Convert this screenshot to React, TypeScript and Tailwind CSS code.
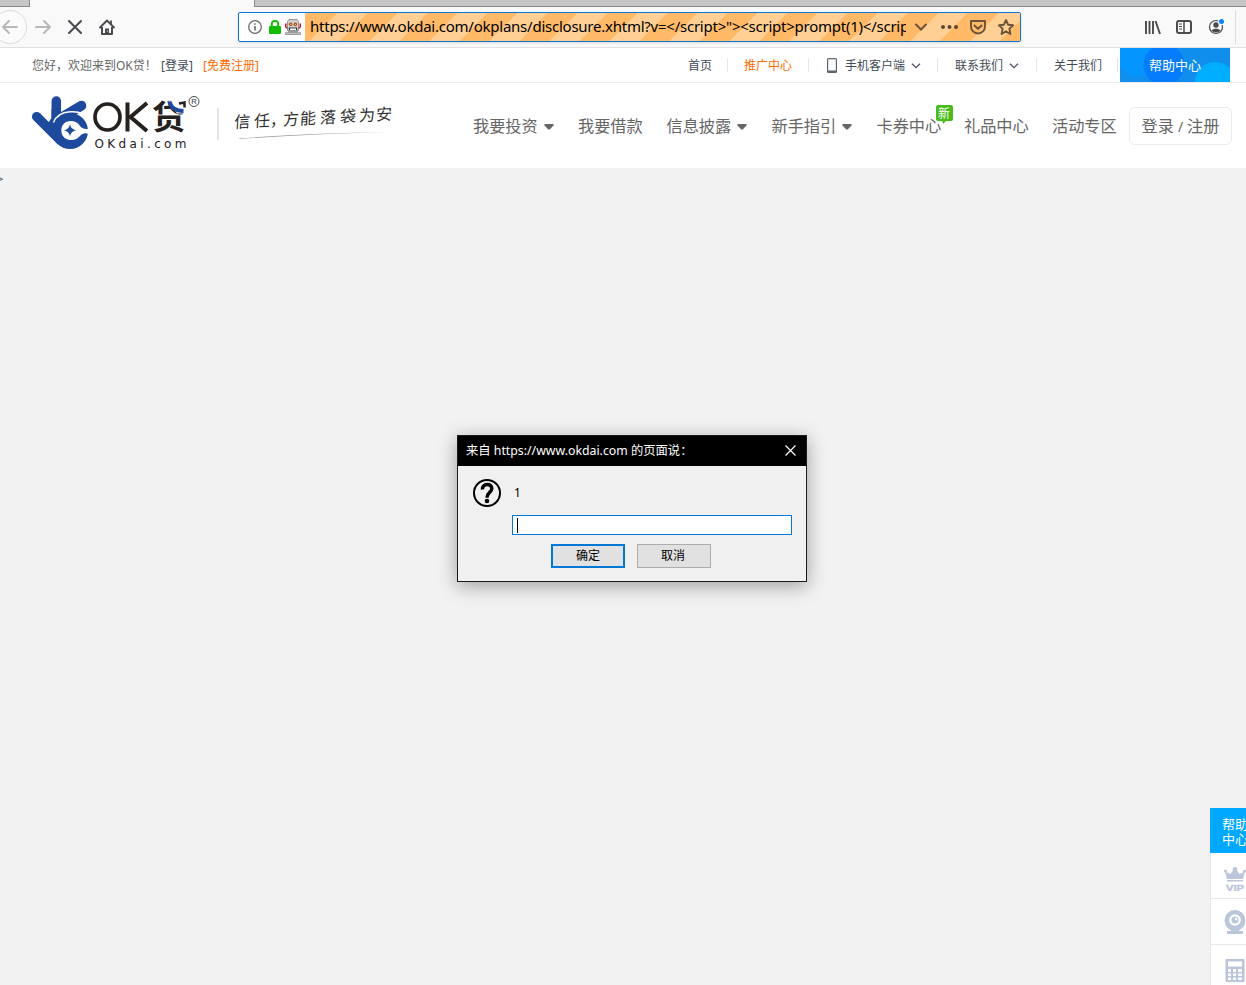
import React from "react";

const uiFont = "font-['Noto_Sans','Noto_Sans_CJK_SC',sans-serif]";

function Caret() {
  return (
    <svg width="10" height="6" viewBox="0 0 10 6" className="ml-[6px] mt-[2px] shrink-0">
      <path d="M1 0h8l1 1-4.3 4.600h-1.400L0 1z" fill="#666" />
    </svg>
  );
}

function Chevron() {
  return (
    <svg width="10" height="6" viewBox="0 0 10 6" className="ml-[6px] shrink-0">
      <path d="M1 .7l4 4 4-4" fill="none" stroke="#4b555f" strokeWidth="1.300" />
    </svg>
  );
}

function Divider() {
  return <span className="h-3.5 w-px shrink-0 bg-[#e6e6e6]" />;
}

function Robot() {
  return (
    <svg width="16" height="16" viewBox="0 0 16 16">
      <path d="M0 4.500h1.500V8H3v1.500H1L0 8zM16 4.500h-1.500V8H13v1.500h2L16 8z" fill="#c8102e" />
      <path d="M4 .5h8l1.500 2v9h-11v-9z" fill="#cfcfcf" stroke="#808080" strokeWidth=".8" />
      <circle cx="5.700" cy="5.200" r="1.700" fill="#a33c16" />
      <circle cx="10.300" cy="5.200" r="1.700" fill="#a33c16" />
      <circle cx="5.700" cy="5.200" r=".8" fill="#ffd54a" />
      <circle cx="10.300" cy="5.200" r=".8" fill="#ffd54a" />
      <path d="M4.500 11V9h7v2" fill="none" stroke="#333" strokeWidth="1.200" />
      <path d="M5.200 9.700h5.600v1.300H5.200z" fill="#fff" />
      <path d="M3 12h10v1.500H3z" fill="#9a9a9a" />
      <path d="M.5 13.700h15v1.900H.5z" fill="#cfcfcf" stroke="#777" strokeWidth=".7" />
    </svg>
  );
}

function Browser() {
  return (
    <div className="h-12 border-b border-[#e0e0e1] bg-[#f9f9fa]">
      <div className="flex h-[7px]">
        <div className="w-[30px] border-r border-b border-[#8a8a8a] bg-[#c6c6c6]" />
        <div className="w-[224px]" />
        <div className="flex-1 border-b border-l border-[#8a8a8a] bg-[#c6c6c6]" />
      </div>
      <div className="flex h-10 items-center">
        <svg width="130" height="40" viewBox="0 0 130 40" className="shrink-0">
          <circle cx="10" cy="20" r="16.500" fill="#fbfbfb" stroke="#dcdcdc" />
          <g fill="none" stroke="#b8b8b8" strokeWidth="2" strokeLinecap="round" strokeLinejoin="round">
            <path d="M17 20H3M9 14l-6 6 6 6" />
            <path d="M36 20h14M44 14l6 6-6 6" />
          </g>
          <path d="M69 14l12 12M81 14L69 26" stroke="#4a4a4f" strokeWidth="2" strokeLinecap="round" />
          <path d="M111 13.500v4" stroke="#4a4a4f" strokeWidth="1.800" />
          <path d="M100 20.500l7-7 7 7" fill="none" stroke="#4a4a4f" strokeWidth="1.900" strokeLinecap="round" strokeLinejoin="round" />
          <path d="M102 20v7h10v-7" fill="none" stroke="#4a4a4f" strokeWidth="2" strokeLinejoin="round" />
          <path d="M105 21.500h4V27h-4z" fill="#4a4a4f" />
          <path d="M107.500 23.500v1" stroke="#f9f9fa" />
        </svg>
        <div className="ml-[108px] flex h-[30px] w-[783px] shrink-0 items-center rounded-xs border border-[#0a78d7] bg-white shadow-sm">
          <div className="flex w-[66px] shrink-0 items-center pl-[9px]">
            <svg width="14" height="14" viewBox="0 0 14 14">
              <circle cx="7" cy="7" r="6.300" fill="none" stroke="#6b6b70" strokeWidth="1.300" />
              <path d="M7 6v4.500M7 3.300v1.500" stroke="#6b6b70" strokeWidth="1.600" />
            </svg>
            <svg width="12" height="14" viewBox="0 0 12 14" className="ml-[7px]">
              <path d="M2.800 7V4a3.200 3.200 0 016.400 0v3" fill="none" stroke="#12bc00" strokeWidth="2" />
              <rect y="6" width="12" height="8" rx="1" fill="#12bc00" />
            </svg>
            <span className="ml-[4px]"><Robot /></span>
          </div>
          <div className="flex h-full min-w-0 flex-1 items-center bg-[repeating-linear-gradient(135deg,#ffcf94_0px,#ffcf94_2px,#ffb967_2px,#ffb967_23.3px,#ffcf94_23.3px,#ffcf94_42.43px)] pl-[5px]">
            <div className={`mb-[2px] w-[596px] shrink-0 overflow-hidden text-[15px] leading-[26px] tracking-[-0.24px] whitespace-nowrap text-black ${uiFont}`}>
              {'https://www.okdai.com/okplans/disclosure.xhtml?v=</script>"><script>prompt(1)</script>'}
            </div>
            <svg width="110" height="28" viewBox="0 0 110 28" className="ml-px shrink-0">
              <path d="M9 11.500l5 5 5-5" fill="none" stroke="#6b5238" strokeWidth="2" strokeLinecap="round" />
              <g fill="#5d4630">
                <circle cx="36" cy="14" r="2" />
                <circle cx="42.500" cy="14" r="2" />
                <circle cx="49" cy="14" r="2" />
              </g>
              <g fill="none" stroke="#6b5238" strokeWidth="1.900" strokeLinecap="round" strokeLinejoin="round">
                <path d="M64 8h14v5.500a7 7 0 01-14 0zM67.500 12.500l3.500 3.300 3.500-3.300" />
                <path d="M99 7l2.100 4.700 5 .6-3.700 3.500 1 5.200-4.400-2.600-4.400 2.600 1-5.200-3.700-3.500 5-.6z" />
              </g>
            </svg>
          </div>
        </div>
        <svg width="110" height="40" viewBox="0 0 110 40" className="ml-[115px] shrink-0">
          <g stroke="#4a4a4f" strokeWidth="2" fill="none">
            <path d="M10 14v13M13.500 14v13M17 14v13M19.500 14l4.500 13" strokeWidth="1.900" />
            <rect x="41" y="14" width="14" height="12" rx="2" />
            <path d="M48 14v12" strokeWidth="1.500" />
            <path d="M43 17h3M43 19.500h3M43 22h3" strokeWidth="1" />
          </g>
          <circle cx="80" cy="20" r="6.500" fill="none" stroke="#4a4a4f" strokeWidth="1.200" />
          <circle cx="80" cy="18" r="2.700" fill="#4a4a4f" />
          <path d="M75.500 23.500c2-2.500 7-2.500 9 0-2 2.500-7 2.500-9 0z" fill="#4a4a4f" />
          <circle cx="85.500" cy="14.500" r="3.400" fill="#f9f9fa" />
          <circle cx="85.500" cy="14.500" r="2.500" fill="#0a84ff" />
          <path d="M99.500 3v34" stroke="#dcdcdc" />
        </svg>
      </div>
    </div>
  );
}

function TopBar() {
  return (
    <div className="flex h-[35px] items-center border-b border-[#ececec] bg-white text-xs whitespace-nowrap text-[#414b55]">
      <div className="flex w-[688px] shrink-0 pt-[2px] pl-8 text-[#666]">
        <span className="w-[129px]">您好，欢迎来到OK贷！</span>
        <span className="w-[42px] text-[#414b55]">[登录]</span>
        <span className="text-[#ff6b00]">[免费注册]</span>
      </div>
      <span className="w-[39px] shrink-0 pt-[2px]">首页</span>
      <Divider />
      <span className="w-[80px] shrink-0 pt-[2px] pl-4 text-[#ff6b00]">推广中心</span>
      <Divider />
      <span className="flex w-[128px] shrink-0 items-center pt-[2px] pl-[18px]">
        <svg width="11" height="16" viewBox="0 0 11 16" className="mr-[7px] shrink-0">
          <path fillRule="evenodd" d="M1.500 0h7A1.500 1.500 0 0110 1.500v12A1.500 1.500 0 018.500 15h-7A1.500 1.500 0 010 13.500v-12A1.500 1.500 0 011.500 0zM1.200 1.200v11.300h7.600V1.200z" fill="#5d666f" />
        </svg>
        手机客户端<Chevron />
      </span>
      <Divider />
      <span className="flex w-[98px] shrink-0 items-center pt-[2px] pl-[17px]">联系我们<Chevron /></span>
      <Divider />
      <span className="w-[80px] shrink-0 pt-[2px] pl-[17px]">关于我们</span>
      <Divider />
      <div className="relative ml-[2px] flex h-[34px] w-[110px] shrink-0 items-center overflow-hidden bg-[#108eee] pt-[2px] pl-[29px] text-[13px] text-white">
        <svg width="110" height="34" className="absolute inset-0">
          <circle cx="18" cy="8" r="21" fill="#0495ff" />
          <circle cx="44" cy="17" r="20.500" fill="#057cfb" />
          <circle cx="95" cy="34" r="20" fill="#00aeff" />
        </svg>
        <span className="relative">帮助中心</span>
      </div>
    </div>
  );
}

function Logo() {
  return (
    <svg width="420" height="85" viewBox="0 83 420 85" className="w-[420px] shrink-0">
      <g stroke="#1d4a9c" strokeLinecap="round" fill="none">
        <path d="M36.700 116.700L60 140" strokeWidth="9.500" />
        <path d="M56.300 101v21" strokeWidth="9.500" />
        <path d="M81.300 105.700L64 116" strokeWidth="10" />
      </g>
      <path d="M51.500 109v9l-4 6 12 19 12-12-8-18z" fill="#1d4a9c" />
      <circle cx="70" cy="131" r="18" fill="#1d4a9c" />
      <path d="M53.500 122.500C56 116 62 112.300 70 111.800c4-.3 9 0 13 2" fill="none" stroke="#fff" strokeWidth="1.400" />
      <path d="M61.300 130.500C61.300 119 76 118.500 80 126c2 2.800 5 3.300 9 2.700v5.300c-4-1.500-7-.8-9.500 2.500-5.500 6.500-18.200 4-18.200-6z" fill="#fff" />
      <path d="M80 127c3 3 5.500 2.500 8 2.500v3c-2.500-.3-5 .2-8 3z" fill="#fff" />
      <path d="M70 124.300q1 5 6 6-5 1-6 6-1-5-6-6 5-1 6-6z" fill="#1d4a9c" />
      <ellipse cx="107.500" cy="117" rx="12.500" ry="13" fill="none" stroke="#25211f" strokeWidth="3.700" />
      <path d="M127.500 102.500v29M147 103l-16.500 14 16.500 14" fill="none" stroke="#25211f" strokeWidth="4" />
      <text x="152" y="128.500" fontSize="33" fontWeight="700" textLength="34" lengthAdjust="spacingAndGlyphs" fill="#25211f" fontFamily="'Noto Sans CJK SC', sans-serif">贷</text>
      <path d="M168 100.500h18v13h-9z" fill="#fff" />
      <path d="M169.500 101.500c1.500 6 6 9.500 14 9.500" fill="none" stroke="#1d4a9c" strokeWidth="3.800" />
      <path d="M179 103.500l5.500-1v5" fill="none" stroke="#25211f" strokeWidth="2.500" />
      <circle cx="194" cy="101.500" r="5" fill="none" stroke="#333" strokeWidth=".9" />
      <text x="191.300" y="104.300" fontSize="7.500" fill="#333" fontFamily="'Liberation Sans', sans-serif">R</text>
      <text x="94.500" y="148" fontSize="12" textLength="92" fill="#25211f" fontFamily="'DejaVu Sans', sans-serif">OKdai.com</text>
      <path d="M218 108v32" stroke="#c8c8c8" />
      <g transform="rotate(-3 235 130)">
        <text transform="translate(234 128) skewX(-6)" fontFamily="'Noto Sans CJK SC', sans-serif" fontSize="16" fontWeight="400" fill="#303030" x="0 20 36 49 66 86 106 125 142">信任，方能落袋为安</text>
      </g>
      <path d="M238 138.500c50-4 100-5.500 152-6.500-50 1.500-100 3-149 7z" fill="#999" />
    </svg>
  );
}

function NavItem({ label, width, caret = false, isNew = false }: { label: string; width: string; caret?: boolean; isNew?: boolean }) {
  return (
    <span className={`relative flex shrink-0 items-center ${width}`}>
      {label}
      {caret && <Caret />}
      {isNew && (
        <span className="absolute top-[-9px] left-[59px] flex h-4 w-[17px] items-center justify-center rounded-xs bg-[#49bc1a] pt-px text-xs text-white">
          新
          <svg width="6" height="5" className="absolute top-[15px] left-[6px]"><path d="M0 0h5L1 4z" fill="#49bc1a" /></svg>
        </span>
      )}
    </span>
  );
}

function Header() {
  return (
    <header className="flex h-[85px] bg-white">
      <Logo />
      <nav className="flex h-[87px] flex-1 items-center pl-[53px] text-[16.2px] whitespace-nowrap text-[#666]">
        <NavItem label="我要投资" width="w-[105px]" caret />
        <NavItem label="我要借款" width="w-[88.5px]" />
        <NavItem label="信息披露" width="w-[105px]" caret />
        <NavItem label="新手指引" width="w-[105px]" caret />
        <NavItem label="卡券中心" width="w-[87.5px]" isNew />
        <NavItem label="礼品中心" width="w-[88px]" />
        <NavItem label="活动专区" width="w-[77px]" />
        <span className="mb-[2px] flex h-[38px] w-[103px] shrink-0 items-center justify-center rounded-md border border-[#ebebeb] pt-[2px]">登录<span className="px-[4px] text-sm">/</span>注册</span>
      </nav>
    </header>
  );
}

function Prompt() {
  return (
    <div className="absolute top-[435px] left-[457px] h-[147px] w-[350px] border border-[#1b1b1b] bg-[#f0f0f0] text-xs text-black shadow-[0_4px_18px_rgba(0,0,0,0.35)]">
      <div className="flex h-[30px] items-center justify-between bg-black pr-[10px] pl-2 text-white">
        <span className="text-[12.3px]">来自 https://www.okdai.com 的页面说：</span>
        <svg width="11" height="11" viewBox="0 0 11 11" className="mb-[2px]"><path d="M.5.5l10 10M10.500.5l-10 10" stroke="#fff" strokeWidth="1.200" /></svg>
      </div>
      <div className="flex pt-[13px] pl-[15px]">
        <svg width="28" height="28" viewBox="0 0 28 28">
          <circle cx="14" cy="14" r="13" fill="none" stroke="#000" strokeWidth="2" />
          <path d="M9.500 10.500c-.5-6.500 9.500-6.500 9.300-.8-.2 3.500-4.800 4-4.800 9" fill="none" stroke="#000" strokeWidth="3.500" />
          <circle cx="14" cy="22" r="2.300" />
        </svg>
        <span className="pt-[6px] pl-[13px] leading-4">1</span>
      </div>
      <div className="mt-2 ml-[54px] flex h-5 w-[280px] items-center border border-[#0078d7] bg-white pl-1">
        <span className="h-[15px] w-px bg-black" />
      </div>
      <div className="mt-[9px] flex gap-3 pl-[93px]">
        <button className="h-6 w-[74px] border-2 border-[#0078d7] bg-[#e1e1e1] leading-none">确定</button>
        <button className="h-6 w-[74px] border border-[#adadad] bg-[#e1e1e1] pr-[2px] leading-none">取消</button>
      </div>
    </div>
  );
}

function SideBar() {
  return (
    <aside className="absolute top-[808px] left-[1210px] h-[177px] w-9 overflow-hidden bg-white">
      <div className="h-[45px] w-[60px] bg-[#00a8ff] pt-[9px] pl-3 text-[13px] leading-[15px] text-white">帮助<br />中心</div>
      <div className="h-[46px] border-b border-l border-[#e8e8e8] pt-[14px] pl-[13px]">
        <svg width="23" height="24" viewBox="0 0 23 24" fill="#bcc6da">
          <path d="M3 12L1 4.500l5.500 2.500L9 3.500h4L15.500 7 21 4.500 19 12z" />
          <circle cx="1.500" cy="4" r="1.500" /><circle cx="11" cy="2.300" r="2.300" /><circle cx="20.500" cy="4" r="1.500" />
          <path d="M3 13h16v1.500H3z" />
          <text x="2" y="23.500" fontSize="9.500" fontWeight="700" stroke="#bcc6da" strokeWidth=".4" textLength="18" lengthAdjust="spacingAndGlyphs" fontFamily="'Liberation Sans', sans-serif">VIP</text>
        </svg>
      </div>
      <div className="h-[46px] border-b border-l border-[#e8e8e8] pt-[11px] pl-[13px]">
        <svg width="23" height="26" viewBox="0 0 23 26">
          <circle cx="11" cy="10.500" r="10.500" fill="#bcc6da" />
          <circle cx="11" cy="10" r="5.800" fill="#fff" />
          <circle cx="11" cy="10" r="3.500" fill="#bcc6da" />
          <circle cx="12" cy="9" r="1.300" fill="#fff" />
          <path d="M7 19h8v2h4v3H3v-3h4z" fill="#bcc6da" />
        </svg>
      </div>
      <div className="h-10 border-l border-[#e8e8e8] pt-[14px] pl-[14px]">
        <svg width="20" height="23" viewBox="0 0 20 23">
          <rect x=".5" width="19" height="23" rx="1" fill="#bcc6da" />
          <path d="M3 2.500h14v5H3z" fill="#fff" />
          <path d="M3 10h3v3H3zM8 10h3v3H8zM13 10h4v3h-4zM3 14.500h3v2.500H3zM8 14.500h3v2.500H8zM13 14.500h4v2.500h-4zM3 18.500h3V21H3zM8 18.500h3V21H8zM13 18.500h4V21h-4z" fill="#fff" />
        </svg>
      </div>
    </aside>
  );
}

export default function App() {
  return (
    <div className={`relative h-[985px] w-[1246px] overflow-hidden bg-[#f2f2f2] ${uiFont}`}>
      <Browser />
      <TopBar />
      <Header />
      <main className="pt-[5px] text-[11px] leading-3 text-[#414b55]">
        <span className="-ml-[3px]">&gt;</span>
      </main>
      <Prompt />
      <SideBar />
    </div>
  );
}
